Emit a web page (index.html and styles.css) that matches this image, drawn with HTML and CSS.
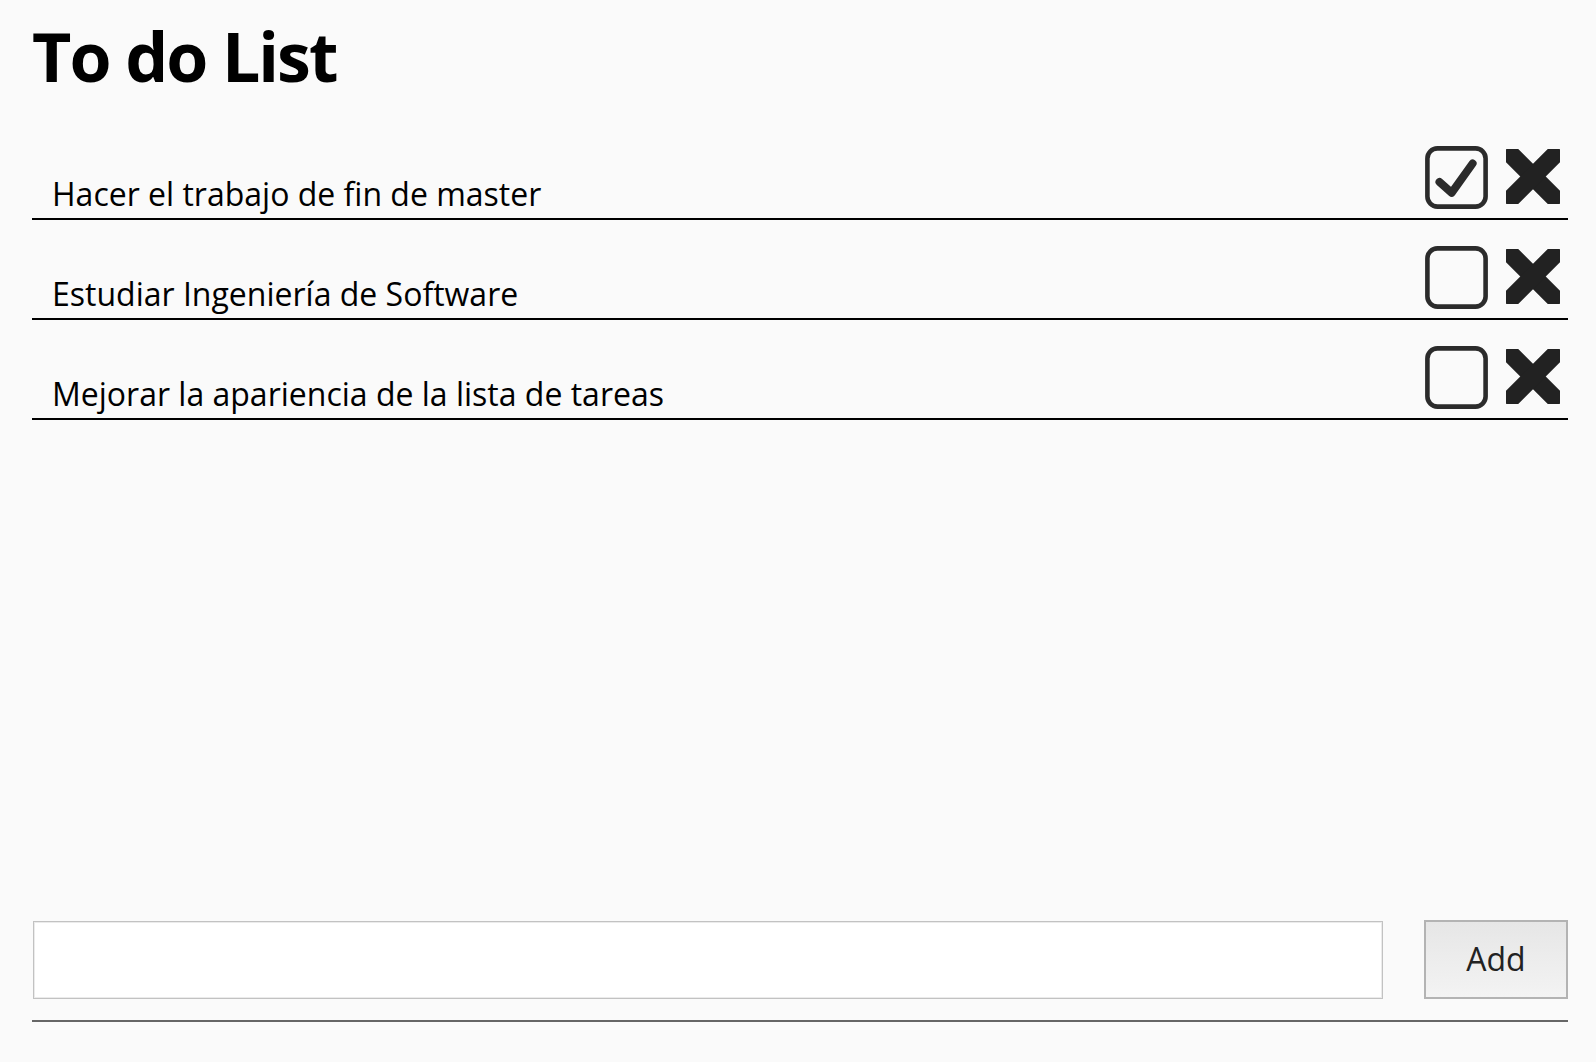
FILE: index.html
```html
<!DOCTYPE html>
<html lang="es">
<head>
<meta charset="utf-8">
<title>To do List</title>
<link rel="stylesheet" href="styles.css">
</head>
<body>
<div class="app">
  <h1 class="title">To do List</h1>
  <ul class="tasks">
    <li class="task">
      <span class="task-text">Hacer el trabajo de fin de master</span>
      <svg class="check" viewBox="0 0 63 63" width="63" height="63" aria-hidden="true">
        <rect x="2.4" y="2.4" width="58.2" height="58.2" rx="10" fill="none" stroke="#2b2b2b" stroke-width="4.6"/>
        <polyline points="14.5,36 26.6,46.8 47.6,17.5" fill="none" stroke="#2b2b2b" stroke-width="8" stroke-linecap="round" stroke-linejoin="round"/>
      </svg>
      <svg class="remove" viewBox="0 0 54 55" width="54" height="55" aria-hidden="true">
        <g fill="#222">
          <rect x="-11.2" y="18.5" width="76.4" height="18" rx="2.5" transform="rotate(45 27 27.5)"/>
          <rect x="-11.2" y="18.5" width="76.4" height="18" rx="2.5" transform="rotate(-45 27 27.5)"/>
        </g>
      </svg>
    </li>
    <li class="task">
      <span class="task-text">Estudiar Ingeniería de Software</span>
      <svg class="check" viewBox="0 0 63 63" width="63" height="63" aria-hidden="true">
        <rect x="2.4" y="2.4" width="58.2" height="58.2" rx="10" fill="none" stroke="#2b2b2b" stroke-width="4.6"/>
      </svg>
      <svg class="remove" viewBox="0 0 54 55" width="54" height="55" aria-hidden="true">
        <g fill="#222">
          <rect x="-11.2" y="18.5" width="76.4" height="18" rx="2.5" transform="rotate(45 27 27.5)"/>
          <rect x="-11.2" y="18.5" width="76.4" height="18" rx="2.5" transform="rotate(-45 27 27.5)"/>
        </g>
      </svg>
    </li>
    <li class="task">
      <span class="task-text">Mejorar la apariencia de la lista de tareas</span>
      <svg class="check" viewBox="0 0 63 63" width="63" height="63" aria-hidden="true">
        <rect x="2.4" y="2.4" width="58.2" height="58.2" rx="10" fill="none" stroke="#2b2b2b" stroke-width="4.6"/>
      </svg>
      <svg class="remove" viewBox="0 0 54 55" width="54" height="55" aria-hidden="true">
        <g fill="#222">
          <rect x="-11.2" y="18.5" width="76.4" height="18" rx="2.5" transform="rotate(45 27 27.5)"/>
          <rect x="-11.2" y="18.5" width="76.4" height="18" rx="2.5" transform="rotate(-45 27 27.5)"/>
        </g>
      </svg>
    </li>
  </ul>
  <form class="add-form">
    <input class="add-input" type="text" aria-label="Nueva tarea">
    <button class="add-button" type="button">Add</button>
  </form>
  <div class="rule"></div>
</div>
</body>
</html>
```
FILE: styles.css
```css
html, body {
  margin: 0;
  padding: 0;
  background: #fafafa;
}

.app {
  min-height: 100vh;
  box-sizing: border-box;
  padding: 0 28px 40px 32px;
  display: flex;
  flex-direction: column;
  font-family: "Open Sans", "Liberation Sans", sans-serif;
  color: #000;
}

.title {
  margin: 0;
  padding-top: 10px;
  font-size: 68px;
  font-weight: 700;
  line-height: 1.362;
  letter-spacing: -2px;
}

.tasks {
  list-style: none;
  margin: 17px 0 0 0;
  padding: 0;
  flex: 1;
}

.task {
  height: 100px;
  box-sizing: border-box;
  border-bottom: 2px solid #000;
  display: flex;
  align-items: flex-end;
}

.task-text {
  flex: 1;
  font-size: 32px;
  line-height: 44px;
  padding: 0 0 2px 20px;
}

.check {
  display: block;
  flex: none;
  margin-bottom: 9px;
}

.remove {
  display: block;
  flex: none;
  margin: 0 8px 14px 18px;
}

.add-form {
  display: flex;
  gap: 41px;
  margin: 0;
}

.add-input {
  flex: 1;
  height: 78px;
  box-sizing: border-box;
  margin: 0 0 0 1px;
  border: 1px solid #c2c2c2;
  box-shadow: inset 0 0 0 1px #ebebeb;
  background: #fff;
  font-family: "Open Sans", sans-serif;
  font-size: 32px;
  padding: 0 12px;
}

.add-button {
  width: 144px;
  height: 79px;
  box-sizing: border-box;
  margin-top: -1px;
  border: 2px solid #b3b3b3;
  background: linear-gradient(#e6e6e6, #f3f3f3);
  font-family: "Open Sans", sans-serif;
  font-size: 32px;
  line-height: 1;
  color: #222;
  padding: 0 0 2px 0;
}

.rule {
  margin-top: 21px;
  border-top: 2px solid #666;
}
```
